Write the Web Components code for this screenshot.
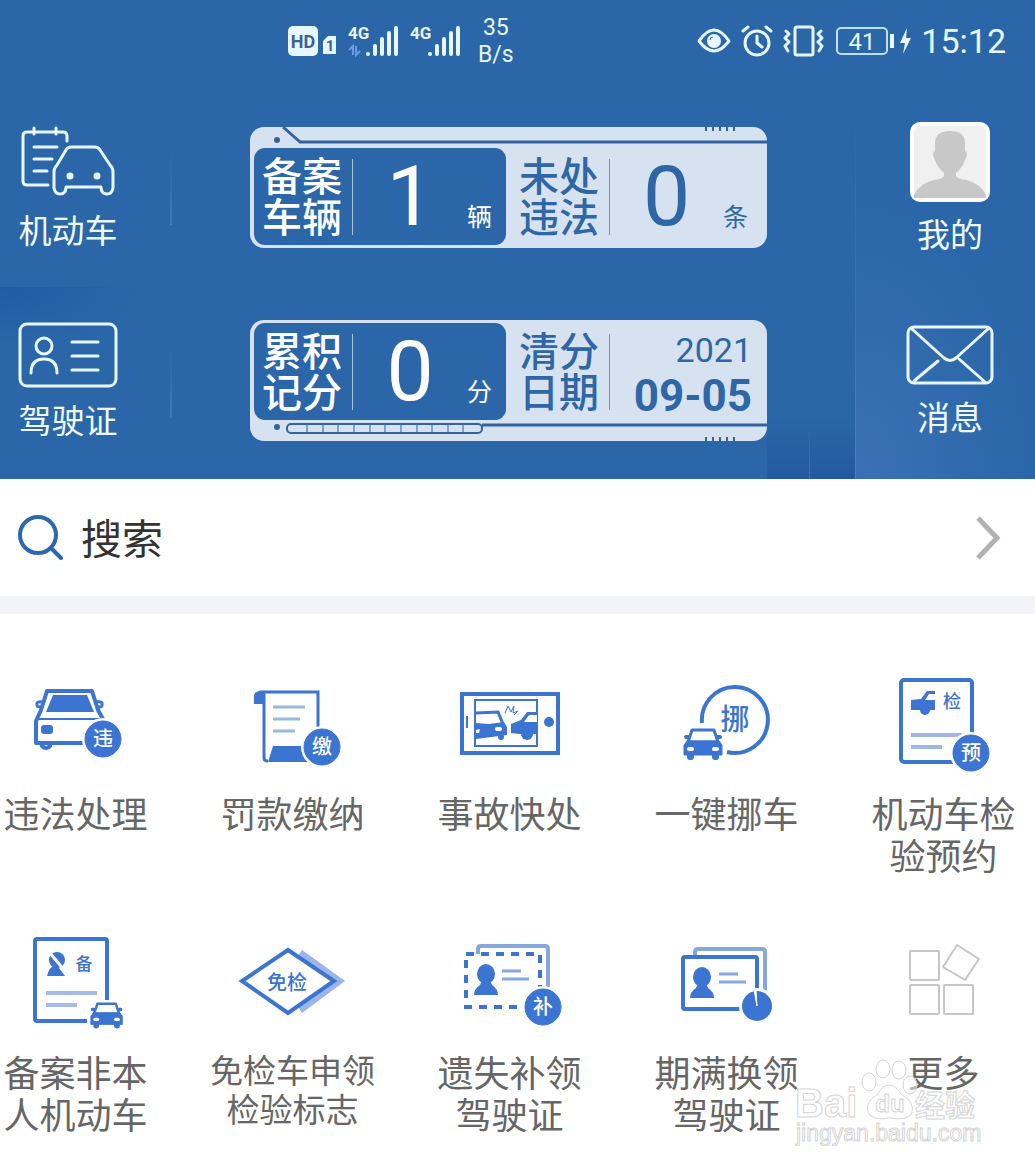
<!DOCTYPE html>
<html lang="zh-CN">
<head>
<meta charset="utf-8">
<meta name="viewport" content="width=device-width, initial-scale=1">
<title>交管</title>
<style>
    body {
        margin: 0;
        background: #fff;
        font-family: "Noto Sans CJK SC", sans-serif;
        overflow-x: hidden;
    }
</style>
</head>
<body>
<home-page></home-page>

<script>
// 小汽车正面，多个图标共用 (40 x 32)
const CAR = `
    <path d="M9 2H31L35 14H5Z" fill="#fff" stroke="#3b74d1" stroke-width="3" stroke-linejoin="round"/>
    <path d="M3 9H5M35 9H37" stroke="#3b74d1" stroke-width="4" stroke-linecap="round"/>
    <path d="M4 13H36L39 17V27H1V17Z" fill="#3b74d1" stroke="#3b74d1" stroke-width="1" stroke-linejoin="round"/>
    <rect x="4" y="25" width="7" height="7" rx="3" fill="#3b74d1"/>
    <rect x="29" y="25" width="7" height="7" rx="3" fill="#3b74d1"/>
    <rect x="4" y="19" width="7" height="4" rx="2" fill="#fff"/>
    <rect x="29" y="19" width="7" height="4" rx="2" fill="#fff"/>`;

// 右下角圆形角标
const badge = (x, y, text) => `
    <circle cx="${x}" cy="${y}" r="21" fill="#fff"/>
    <circle cx="${x}" cy="${y}" r="18" fill="#3b74d1" stroke="#3b74d1"/>
    <text x="${x}" y="${y + 7}" font-size="20" font-weight="500" fill="#fff" text-anchor="middle">${text}</text>`;

const PERSON = `<ellipse cx="12" cy="9" rx="9" ry="10"/><path d="M8 15H16L18 20Q24 24 24 30H0Q0 24 6 20Z"/>`;

// 服务图标，画布 121 x 100
const TILE_ICONS = {
    violation: `
        <g fill="none" stroke="#3b74d1" stroke-width="4" stroke-linejoin="round" stroke-linecap="round">
            <path d="M67 69H21V47L26 36L32 17H77L83 36L89 47"/>
            <path d="M27 28Q21 27 22 31Q22 33 26 33M82 28Q88 27 87 31Q87 33 84 33" stroke-width="3"/>
            <path d="M27 70V72Q31 76 35 72V70"/>
        </g>
        <path d="M21 45H88" stroke="#3b74d1" stroke-width="2"/>
        <path d="M38 21H72L79 38H31Z" fill="#3b74d1"/>
        <rect x="26" y="51" width="12" height="9" rx="3" fill="#3b74d1"/>
        ${badge(88, 65, "违")}`,
    payment: `
        <path d="M33 18V30H22V22Q22 18 27 17H34" fill="#3b74d1"/>
        <path d="M27 18H86V56M32 20V84Q32 87 36 87" fill="none" stroke="#3b74d1" stroke-width="3"/>
        <path d="M36 88L41 72H76V88Z" fill="#3b74d1"/>
        <path d="M41 33H73M41 45H68M41 57H63" stroke="#9bb9d8" stroke-width="3"/>
        ${badge(90, 73, "缴")}`,
    accident: `
        <rect x="13" y="20" width="96" height="59" fill="#fff" stroke="#3b74d1" stroke-width="4"/>
        <rect x="26" y="26" width="62" height="46" fill="none" stroke="#3b74d1" stroke-width="2"/>
        <path d="M18 42V54" stroke="#3b74d1" stroke-width="2"/>
        <circle cx="100" cy="48" r="5" fill="#3b74d1"/>
        <path d="M27 39L49 38L54 50" fill="none" stroke="#3b74d1" stroke-width="3"/>
        <path d="M27 49L40 50L55 48L58 53V61L27 65Z" fill="#3b74d1"/>
        <circle cx="52" cy="63" r="3" fill="#3b74d1"/>
        <rect x="46" y="53" width="7" height="4" rx="2" fill="#fff"/>
        <path d="M27 56L31 55L30 59H27Z" fill="#fff"/>
        <path d="M56 39L59 32L62 38L65 32L64 39L69 37L65 41" fill="none" stroke="#3b74d1" stroke-width="1"/>
        <path d="M88 38H78L72 46L62 50V59L70 60H88Z" fill="#3b74d1"/>
        <path d="M80 41H88V48H75Z" fill="#fff"/>
        <circle cx="78" cy="60" r="6" fill="#3b74d1"/>`,
    move: `
        <path d="M36 49A33 33 0 1 1 61 78" fill="none" stroke="#3b74d1" stroke-width="4"/>
        <text x="69" y="56" font-size="29" font-weight="500" fill="#3b74d1" text-anchor="middle">挪</text>
        <g transform="translate(17 54)">${CAR}</g>`,
    inspect: `
        <rect x="18" y="6" width="71" height="82" rx="3" fill="#fff" stroke="#3b74d1" stroke-width="4"/>
        <path d="M28 26L38 25L44 17H52V20H46L42 26H52V36H28Z" fill="#3b74d1"/>
        <circle cx="42" cy="36" r="5" fill="#3b74d1"/>
        <text x="69" y="34" font-size="18" font-weight="500" fill="#3b74d1" text-anchor="middle">检</text>
        <path d="M28 61H79M28 73H59" stroke="#9db9e3" stroke-width="4"/>
        ${badge(88, 79, "预")}`,
    record: `
        <path d="M92 67V8Q92 6 90 6H22Q20 6 20 8V86Q20 88 22 88H72" fill="#fff" stroke="#3b74d1" stroke-width="4"/>
        <circle cx="42" cy="27" r="8" fill="#3b74d1"/>
        <path d="M32 43Q34 34 41 31L50 43Z" fill="#3b74d1"/>
        <path d="M35 20L50 38" stroke="#fff" stroke-width="3"/>
        <text x="69" y="37" font-size="17" font-weight="500" fill="#3b74d1" text-anchor="middle">备</text>
        <path d="M31 60H82M31 72H62" stroke="#a6b9e8" stroke-width="4"/>
        <g transform="translate(75 69) scale(.83)">${CAR}</g>`,
    exempt: `
        <path d="M70 17L113 48L70 80L50 48Z" fill="#9db4e8"/>
        <path d="M56 17L102 48L56 80L10 48Z" fill="#fff" stroke="#3b74d1" stroke-width="4"/>
        <text x="55" y="57" font-size="20" font-weight="500" fill="#3b74d1" text-anchor="middle">免检</text>`,
    reissue: `
        <path d="M29 21V16Q29 13 32 13H96Q99 13 99 16V54" fill="none" stroke="#86a8dd" stroke-width="4"/>
        <rect x="17" y="21" width="74" height="53" fill="#fff" stroke="#3b74d1" stroke-width="4" stroke-dasharray="8 7"/>
        <g transform="translate(25 32)" fill="#3b74d1">${PERSON}</g>
        <path d="M53 38H72M53 46H80" stroke="#86a8dd" stroke-width="3"/>
        ${badge(94, 74, "补")}`,
    renew: `
        <path d="M29 24V19Q29 16 32 16H96Q99 16 99 19V60" fill="none" stroke="#86a8dd" stroke-width="4"/>
        <rect x="17" y="24" width="74" height="52" rx="2" fill="#fff" stroke="#3b74d1" stroke-width="4"/>
        <g transform="translate(24 35)" fill="#3b74d1">${PERSON}</g>
        <path d="M53 41H72M53 49H80" stroke="#86a8dd" stroke-width="3"/>
        <circle cx="91" cy="73" r="18" fill="#fff"/>
        <circle cx="91" cy="73" r="15" fill="#3b74d1"/>
        <path d="M88 57L91 73L90 57" fill="#fff" stroke="#fff"/>`,
    more: `
        <g fill="#fff" stroke="#c6c6c6" stroke-width="2" stroke-linejoin="round">
            <rect x="27" y="18" width="29" height="29" rx="1"/>
            <rect x="27" y="52" width="29" height="29" rx="1"/>
            <rect x="61" y="52" width="29" height="29" rx="1"/>
            <path d="M74 12L96 26L82 47L60 34Z"/>
        </g>`
};

// 顶部左右两侧入口图标
const SIDE_ICONS = {
    vehicle: `<svg width="94" height="72" viewBox="0 0 94 72" fill="none" stroke="#e6f7ff" stroke-width="3" stroke-linecap="round" stroke-linejoin="round">
        <path d="M27 59H6Q2 59 2 55V10Q2 6 6 6H42Q46 6 46 10V15M13 2V8M35 2V8M13 21H36M13 33H31M13 45H26"/>
        <path d="M50 21H74Q77 21 79 24L89 39Q92 42 92 46V62Q91 68 86 68Q80 68 80 61H45Q45 68 39 68Q34 68 33 62V46Q33 42 36 39L45 24Q47 21 50 21Z"/>
        <circle cx="49" cy="50" r="2" fill="#e6f7ff"/><circle cx="76" cy="50" r="2" fill="#e6f7ff"/>
    </svg>`,
    license: `<svg width="100" height="66" viewBox="0 0 100 66" fill="none" stroke="#e6f7ff" stroke-width="3" stroke-linecap="round">
        <rect x="2" y="2" width="96" height="62" rx="7"/>
        <circle cx="26" cy="24" r="8"/>
        <path d="M13 51Q13 37 26 37Q39 37 39 51"/>
        <path d="M54 20H80M54 34H80M54 48H80"/>
    </svg>`,
    profile: `<svg width="80" height="80" viewBox="0 0 80 80">
        <rect width="80" height="80" rx="10" fill="#fff"/>
        <rect x="4" y="4" width="72" height="72" rx="6" fill="#f0f0f0"/>
        <path d="M40 9Q54 9 55 20V29Q59 30 55 38Q53 45 46 51V54Q48 57 56 58Q70 61 76 73V76H4V73Q10 61 24 58Q32 57 34 54V51Q27 45 25 38Q21 30 25 29V20Q26 9 40 9Z" fill="#c8c8c8"/>
    </svg>`,
    message: `<svg width="88" height="60" viewBox="0 0 88 60" fill="none" stroke="#e6f7ff" stroke-width="3" stroke-linecap="round" stroke-linejoin="round">
        <rect x="2" y="2" width="84" height="56" rx="6"/>
        <path d="M6 4L38 33Q44 38 50 33L82 4M8 56L32 36M53 34L79 57"/>
    </svg>`
};

class StatusBar extends HTMLElement {
    constructor() {
        super();
        this.attachShadow({ mode: 'open' });
    }

    connectedCallback() {
        const signal = (arrows) => `
        <svg width="52" height="34" viewBox="0 0 52 34">
            <text x="0" y="15" font-size="17" font-weight="700" fill="#e6f7ff">4G</text>
            ${arrows ? '<path d="M5 31V22L1 26M8 22V31L12 27" fill="none" stroke="#6f9be0" stroke-width="2"/>' : ''}
            <path d="M20 30V30M27 30V22M34 30V15M41 30V9M48 30V4" stroke="#e6f7ff" stroke-width="4" stroke-linecap="round"/>
        </svg>`;
        this.shadowRoot.innerHTML = `
        <style>
        :host {
            display: flex;
            justify-content: space-between;
            align-items: center;
            height: 82px;
            padding: 0 29px 0 288px;
            color: #e6f7ff;
            font-family: Roboto, sans-serif;
        }

        .group {
            display: flex;
            align-items: center;
            gap: 10px;
        }

        .speed {
            margin-left: 6px;
            font-size: 23px;
            line-height: 27px;
            text-align: center;
        }

        .time {
            font-size: 34px;
            line-height: 40px;
        }

        svg {
            display: block;
        }
        </style>
        <div class="group">
            <svg width="50" height="30" viewBox="0 0 50 30">
                <rect width="30" height="30" rx="5" fill="#e6f7ff"/>
                <text x="15" y="22" font-size="18" font-weight="700" fill="#3a6294" text-anchor="middle">HD</text>
                <path d="M36 14L40 10H48V28H35V15Z" fill="#e6f7ff"/>
                <text x="42" y="25" font-size="15" font-weight="700" fill="#3a6294" text-anchor="middle">1</text>
            </svg>
            ${signal(true)}
            ${signal(false)}
            <div class="speed">35<br>B/s</div>
        </div>
        <div class="group">
            <svg width="34" height="28" viewBox="0 0 34 28">
                <path d="M2 14Q17 -8 32 14Q17 34 2 14Z" fill="none" stroke="#e6f7ff" stroke-width="3" stroke-linejoin="round"/>
                <circle cx="17" cy="14" r="7" fill="#e6f7ff"/>
                <path d="M13 13Q13 10 16 10" fill="none" stroke="#2a66a8" stroke-width="1"/>
            </svg>
            <svg width="32" height="32" viewBox="0 0 32 32" fill="none" stroke="#e6f7ff" stroke-width="3" stroke-linecap="round">
                <circle cx="16" cy="18" r="12"/>
                <path d="M16 11V18L21 22M2 6L7 2M30 6L25 2"/>
            </svg>
            <svg width="42" height="32" viewBox="0 0 42 32" fill="none" stroke="#e6f7ff" stroke-width="3" stroke-linecap="round" stroke-linejoin="round">
                <rect x="12" y="2" width="18" height="28" rx="2" stroke-width="3"/>
                <path d="M3 6L6 9L2 13L6 17L2 21L5 26M38 6L35 9L39 13L35 17L39 21L36 26"/>
            </svg>
            <svg width="76" height="30" viewBox="0 0 76 30">
                <rect x="2" y="2" width="50" height="26" rx="4" fill="none" stroke="#bfe0fa" stroke-width="2"/>
                <text x="27" y="24" font-size="24" fill="#e6f7ff" text-anchor="middle">41</text>
                <path d="M57 8V22" stroke="#e6f7ff" stroke-width="4"/>
                <path d="M72 2L65 17H70L68 28L76 12H71Z" fill="#e6f7ff"/>
            </svg>
            <span class="time">15:12</span>
        </div>
      `;
    }
}

class SideLink extends HTMLElement {
    constructor() {
        super();
        this.attachShadow({ mode: 'open' });
    }

    connectedCallback() {
        this.shadowRoot.innerHTML = `
        <style>
        :host {
            display: block;
        }

        a {
            display: flex;
            flex-direction: column;
            align-items: center;
            gap: 15px;
            padding-bottom: 4px;
            color: #effaff;
            font-size: 33px;
            line-height: 32px;
            text-decoration: none;
        }

        svg {
            display: block;
        }
        </style>
        <a href="#${this.getAttribute('icon')}">
            ${SIDE_ICONS[this.getAttribute('icon')]}
            <span><slot></slot></span>
        </a>
      `;
    }
}

// 一格数据：标题 | 数值 单位
class StatPanel extends HTMLElement {
    constructor() {
        super();
        this.attachShadow({ mode: 'open' });
    }

    connectedCallback() {
        this.shadowRoot.innerHTML = `
        <style>
        :host {
            display: flex;
            align-items: center;
            height: 97px;
            box-sizing: border-box;
            padding: 0 19px 0 13px;
            color: #2f66a6;
        }

        :host(:not([unit])) {
            padding-right: 15px;
        }

        :host([solid]) {
            padding: 0 14px 0 8px;
            border-radius: 11px;
            background: #2a66a8;
            color: #fff;
        }

        .title {
            width: 2em;
            margin-bottom: 4px;
            font-size: 40px;
            font-weight: 500;
            line-height: 41px;
        }

        .line {
            width: 1px;
            height: 76px;
            margin-left: 10px;
            background: currentColor;
            opacity: .6;
        }

        .value {
            flex: 1;
            font-family: Roboto, sans-serif;
            font-size: 84px;
            line-height: 97px;
            text-align: center;
        }

        .unit {
            align-self: flex-end;
            margin-bottom: 18px;
            font-size: 25px;
            line-height: 24px;
        }
        </style>
        <div class="title">${this.getAttribute('label')}</div>
        <div class="line"></div>
        <div class="value"><slot></slot></div>
        <div class="unit">${this.getAttribute('unit') || ''}</div>
      `;
    }
}

class DateValue extends HTMLElement {
    constructor() {
        super();
        this.attachShadow({ mode: 'open' });
    }

    connectedCallback() {
        this.shadowRoot.innerHTML = `
        <style>
        :host {
            display: flex;
            flex-direction: column;
            align-items: flex-end;
            padding-top: 2px;
            font-size: 34px;
            line-height: 46px;
        }

        b {
            font-size: 44px;
        }
        </style>
        <span>${this.getAttribute('year')}</span>
        <b>${this.getAttribute('day')}</b>
      `;
    }
}

class StatCard extends HTMLElement {
    constructor() {
        super();
        this.attachShadow({ mode: 'open' });
    }

    connectedCallback() {
        const top = `
            <path d="M33 0L50 15" stroke="#33639f" stroke-width="3"/>
            <line x1="49" y1="15" x2="100%" y2="15" stroke="#33639f" stroke-width="3"/>
            <circle cx="27" cy="13" r="3" fill="#33639f"/>
            <svg x="100%" overflow="visible"><path d="M-61 0V4M-54 0V4M-47 0V4M-40 0V4M-33 0V4" stroke="#33639f" stroke-width="2"/></svg>`;
        const bottom = `
            <line x1="232" y1="5" x2="100%" y2="5" stroke="#33639f" stroke-width="3"/>
            <rect x="37" y="4" width="195" height="9" rx="4" fill="none" stroke="#33639f" stroke-width="2"/>
            <path d="M57 4V13M73 4V13M88 4V13M104 4V13M120 4V13M135 4V13M151 4V13M167 4V13M182 4V13M198 4V13M213 4V13" stroke="#33639f" stroke-width="1"/>
            <circle cx="27" cy="7" r="3" fill="#33639f"/>
            <svg x="100%" overflow="visible"><path d="M-61 17V21M-54 17V21M-47 17V21M-40 17V21M-33 17V21" stroke="#33639f" stroke-width="2"/></svg>`;
        const isTop = this.getAttribute('trim') === 'top';
        this.shadowRoot.innerHTML = `
        <style>
        :host {
            display: flex;
            flex-direction: ${isTop ? 'column' : 'column-reverse'};
            box-sizing: border-box;
            padding: ${isTop ? '0 0 3px' : '3px 0 0'};
            border-radius: 14px;
            background: #d6e2f0;
            overflow: hidden;
        }

        .trim {
            display: block;
            width: 100%;
            height: 21px;
        }

        .panels {
            display: grid;
            grid-template-columns: 252px 1fr;
            padding-left: 4px;
        }
        </style>
        <svg class="trim">${isTop ? top : bottom}</svg>
        <div class="panels"><slot></slot></div>
      `;
    }
}

class HomeHeader extends HTMLElement {
    constructor() {
        super();
        this.attachShadow({ mode: 'open' });
    }

    connectedCallback() {
        this.shadowRoot.innerHTML = `
        <style>
        :host {
            display: block;
            padding-bottom: 2px;
            background:
                linear-gradient(to bottom, transparent, #4a80c0) right 179px top 110px / 1px 369px no-repeat,
                radial-gradient(ellipse at 0 100%, #3a71b5, transparent 70%) right 0 bottom 0 / 179px 290px no-repeat,
                linear-gradient(to bottom, transparent, #3f76b6) right 225px bottom 0 / 1px 56px no-repeat,
                linear-gradient(to bottom, transparent, #235a9f) right 180px bottom 0 / 88px 60px no-repeat,
                radial-gradient(ellipse at 0 0, #215ca3, transparent 70%) left 0 top 287px / 140px 60px no-repeat,
                #2a66a8;
        }

        .rows {
            display: grid;
            grid-template-columns: 250px 1fr 268px;
            grid-auto-rows: 193px;
            align-items: center;
            margin-top: 9px;
        }

        .left {
            display: flex;
            align-items: center;
            gap: 34px;
        }

        .left side-link {
            width: 136px;
        }

        .divider {
            width: 2px;
            height: 74px;
            background: linear-gradient(to bottom, transparent, #4078bd);
        }

        .right {
            display: flex;
            justify-content: flex-end;
        }

        .right side-link {
            width: 170px;
        }
        </style>
        <status-bar></status-bar>
        <div class="rows">
            <div class="left">
                <side-link icon="vehicle">机动车</side-link>
                <div class="divider"></div>
            </div>
            <stat-card trim="top">
                <stat-panel solid label="备案车辆" unit="辆">1</stat-panel>
                <stat-panel label="未处违法" unit="条">0</stat-panel>
            </stat-card>
            <div class="right"><side-link icon="profile">我的</side-link></div>
            <div class="left">
                <side-link icon="license">驾驶证</side-link>
                <div class="divider"></div>
            </div>
            <stat-card trim="bottom">
                <stat-panel solid label="累积记分" unit="分">0</stat-panel>
                <stat-panel label="清分日期"><date-value year="2021" day="09-05"></date-value></stat-panel>
            </stat-card>
            <div class="right"><side-link icon="message">消息</side-link></div>
        </div>
      `;
    }
}

class SearchRow extends HTMLElement {
    constructor() {
        super();
        this.attachShadow({ mode: 'open' });
    }

    connectedCallback() {
        this.shadowRoot.innerHTML = `
        <style>
        :host {
            display: block;
            border-bottom: 18px solid #f3f4f8;
        }

        a {
            display: flex;
            align-items: center;
            height: 117px;
            padding: 0 34px 0 17px;
            color: #333;
            font-size: 41px;
            line-height: 48px;
            text-decoration: none;
        }

        span {
            flex: 1;
            margin-left: 18px;
            padding-bottom: 4px;
        }
        </style>
        <a href="#search">
            <svg width="46" height="46" viewBox="0 0 46 46" fill="none" stroke="#2d68ae" stroke-width="4" stroke-linecap="round">
                <circle cx="21" cy="20" r="18"/><path d="M34 33L44 43"/>
            </svg>
            <span><slot></slot></span>
            <svg width="26" height="44" viewBox="0 0 26 44" fill="none" stroke="#b2b2b2" stroke-width="5">
                <path d="M3 2L22 22L3 42"/>
            </svg>
        </a>
      `;
    }
}

class ServiceTile extends HTMLElement {
    constructor() {
        super();
        this.attachShadow({ mode: 'open' });
    }

    connectedCallback() {
        this.shadowRoot.innerHTML = `
        <style>
        :host {
            display: block;
        }

        a {
            display: flex;
            flex-direction: column;
            align-items: center;
            gap: 17px;
            color: #666;
            text-decoration: none;
        }

        svg {
            display: block;
        }

        span {
            max-width: 4em;
            font-size: 36px;
            line-height: 42px;
            text-align: center;
        }

        :host([small]) span {
            max-width: 5em;
            font-size: 33px;
            line-height: 39px;
        }
        </style>
        <a href="#${this.getAttribute('icon')}">
            <svg width="121" height="100" viewBox="0 0 121 100">${TILE_ICONS[this.getAttribute('icon')]}</svg>
            <span><slot></slot></span>
        </a>
      `;
    }
}

class ServiceGrid extends HTMLElement {
    constructor() {
        super();
        this.attachShadow({ mode: 'open' });
    }

    connectedCallback() {
        this.shadowRoot.innerHTML = `
        <style>
        :host {
            display: grid;
            grid-template-columns: repeat(5, 1fr);
            row-gap: 58px;
            margin: 0 -17px 0 -33px;
            padding: 60px 0 36px;
        }
        </style>
        <slot></slot>
      `;
    }
}

class WaterMark extends HTMLElement {
    constructor() {
        super();
        this.attachShadow({ mode: 'open' });
    }

    connectedCallback() {
        this.shadowRoot.innerHTML = `
        <style>
        :host {
            position: absolute;
            right: 52px;
            bottom: 24px;
            pointer-events: none;
        }

        svg {
            display: block;
        }
        </style>
        <svg width="190" height="94" viewBox="0 0 190 94" font-family="Liberation Sans, sans-serif" fill="#fff" fill-opacity=".5" stroke="#d4d4d4" stroke-width="1">
            <ellipse cx="76" cy="30" rx="7" ry="9"/>
            <ellipse cx="90" cy="17" rx="7" ry="9"/>
            <ellipse cx="106" cy="18" rx="7" ry="9"/>
            <ellipse cx="117" cy="33" rx="7" ry="9"/>
            <path d="M96 33Q103 33 108 42Q122 50 119 61Q115 69 97 66Q78 69 75 60Q72 50 84 43Q90 33 96 33Z"/>
            <text x="2" y="65" font-size="40" font-weight="700">Bai</text>
            <text x="97" y="60" font-size="24" font-weight="700" text-anchor="middle">du</text>
            <text x="122" y="64" font-size="30" font-weight="700" font-family="Noto Sans CJK SC, sans-serif">经验</text>
            <text x="3" y="89" font-size="23">jingyan.baidu.com</text>
        </svg>
      `;
    }
}

class HomePage extends HTMLElement {
    constructor() {
        super();
        this.attachShadow({ mode: 'open' });
    }

    connectedCallback() {
        this.shadowRoot.innerHTML = `
        <style>
        :host {
            display: block;
            position: relative;
            overflow: hidden;
        }
        </style>
        <home-header></home-header>
        <search-row>搜索</search-row>
        <service-grid>
            <service-tile icon="violation">违法处理</service-tile>
            <service-tile icon="payment">罚款缴纳</service-tile>
            <service-tile icon="accident">事故快处</service-tile>
            <service-tile icon="move">一键挪车</service-tile>
            <service-tile icon="inspect">机动车检验预约</service-tile>
            <service-tile icon="record">备案非本人机动车</service-tile>
            <service-tile icon="exempt" small>免检车申领检验标志</service-tile>
            <service-tile icon="reissue">遗失补领驾驶证</service-tile>
            <service-tile icon="renew">期满换领驾驶证</service-tile>
            <service-tile icon="more">更多</service-tile>
        </service-grid>
        <water-mark></water-mark>
      `;
    }
}

customElements.define('status-bar', StatusBar);
customElements.define('side-link', SideLink);
customElements.define('stat-panel', StatPanel);
customElements.define('date-value', DateValue);
customElements.define('stat-card', StatCard);
customElements.define('home-header', HomeHeader);
customElements.define('search-row', SearchRow);
customElements.define('service-tile', ServiceTile);
customElements.define('service-grid', ServiceGrid);
customElements.define('water-mark', WaterMark);
customElements.define('home-page', HomePage);
</script>
</body>
</html>
